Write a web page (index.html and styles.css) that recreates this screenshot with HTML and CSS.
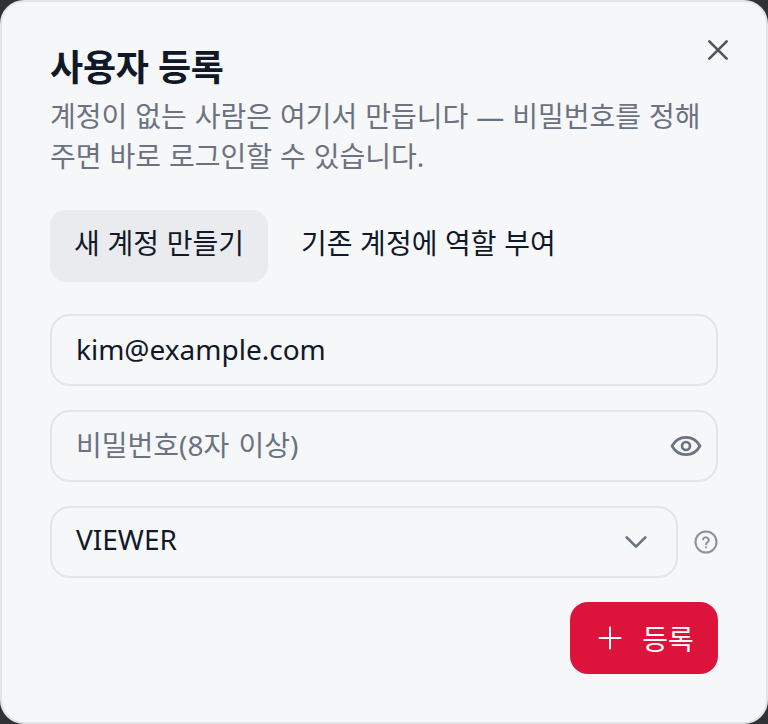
FILE: index.html
```html
<!DOCTYPE html>
<html lang="ko">
<head>
<meta charset="utf-8">
<title>사용자 등록</title>
<link rel="stylesheet" href="styles.css">
</head>
<body>
<div class="dialog">
  <button class="close" aria-label="닫기">
    <svg viewBox="0 0 24 24" width="32" height="32"><path d="M5.500 5.500l13 13M18.500 5.500l-13 13"/></svg>
  </button>
  <h1 class="title">사용자 등록</h1>
  <p class="desc">계정이 없는 사람은 여기서 만듭니다 — 비밀번호를 정해 주면 바로 로그인할 수 있습니다.</p>
  <div class="tabs">
    <span class="tab active">새 계정 만들기</span>
    <span class="tab second">기존 계정에 역할 부여</span>
  </div>
  <div class="form">
    <div class="field email">kim@example.com</div>
    <div class="field placeholder">
      <span class="value">비밀번호(8자 이상)</span>
      <svg class="eye" viewBox="0 0 24 24" width="32" height="32"><path d="M1.500 12C4 7.500 8 5.500 12 5.500S20 7.500 22.500 12C20 16.500 16 18.500 12 18.500S4 16.500 1.500 12Z"/><circle cx="12" cy="12" r="3"/></svg>
    </div>
    <div class="row">
      <div class="field select">
        <span class="value">VIEWER</span>
        <svg class="chev" viewBox="0 0 24 24" width="32" height="32"><path d="M5 8.500l7 7 7-7"/></svg>
      </div>
      <svg class="help" viewBox="0 0 24 24" width="24" height="24"><circle cx="12" cy="12" r="10.500"/><path d="M9 9.300a3 3 0 0 1 5.800 1c0 2-2.800 2.300-2.800 3.900"/><path class="dot" d="M12 17.300v.1"/></svg>
    </div>
  </div>
  <div class="actions">
    <button class="submit">
      <svg viewBox="0 0 24 24" width="24" height="24"><path d="M12 1.500v21M1.500 12h21"/></svg>
      <span>등록</span>
    </button>
  </div>
</div>
</body>
</html>
```
FILE: styles.css
```css
* { box-sizing: border-box; }
html, body { margin: 0; height: 100%; background: #2f3134; }
body { font-family: "Noto Sans", "Noto Sans CJK KR", sans-serif; }
.dialog {
  position: relative;
  width: 768px;
  height: 724px;
  padding: 48px 48px 0;
  background: #f6f7f9;
  border: 2px solid #e2e4e8;
  border-radius: 24px;
  color: #111827;
}
.close {
  position: absolute;
  top: 32px;
  right: 32px;
  padding: 0;
  border: 0;
  background: none;
  display: flex;
}
.close svg path { fill: none; stroke: #52565e; stroke-width: 2; stroke-linecap: round; }
.title { margin: 0; font-size: 36px; line-height: 36px; font-weight: 700; letter-spacing: -0.2px; }
.desc { margin: 10px 0 0; font-size: 28px; line-height: 40px; color: #6b7280; width: 660px; word-spacing: 0.7px; }
.tabs { display: flex; gap: 9px; margin-top: 34px; }
.tab { height: 72px; padding: 0 24px; font-size: 28px; line-height: 66px; border-radius: 16px; color: #111827; }
.tab.active { background: #e9ebef; word-spacing: 0.4px; }
.tab.second { word-spacing: 0.4px; }
.form { display: flex; flex-direction: column; gap: 24px; margin-top: 32px; }
.field {
  height: 72px;
  padding: 0 16px 0 24px;
  border: 2px solid #e2e4e8;
  border-radius: 20px;
  font-size: 28px;
  display: flex;
  align-items: center;
  justify-content: space-between;
}
.email { padding-bottom: 2px; }
.placeholder { color: #6b7280; }
.placeholder .value { margin-bottom: 4px; word-spacing: 2px; }
.select .value { margin-bottom: 6px; }
.eye { margin-right: -2px; }
.eye path, .eye circle { fill: none; stroke: #6b7280; stroke-width: 2; }
.row { display: flex; align-items: center; gap: 16px; }
.select { flex: 1; }
.chev { margin-right: 8px; }
.chev path { fill: none; stroke: #6b7280; stroke-width: 2; stroke-linecap: round; stroke-linejoin: round; }
.help circle, .help path { fill: none; stroke: #8b919b; stroke-width: 2; stroke-linecap: round; }
.actions { display: flex; justify-content: flex-end; margin-top: 24px; }
.submit {
  height: 72px;
  width: 148px;
  border: 0;
  border-radius: 18px;
  background: #dc143c;
  color: #fff;
  font: inherit;
  font-size: 28px;
  display: flex;
  align-items: center;
  justify-content: center;
  gap: 20px;
  padding: 0 0 0 4px;
}
.submit svg path { fill: none; stroke: #fff; stroke-width: 2; stroke-linecap: round; }
```
